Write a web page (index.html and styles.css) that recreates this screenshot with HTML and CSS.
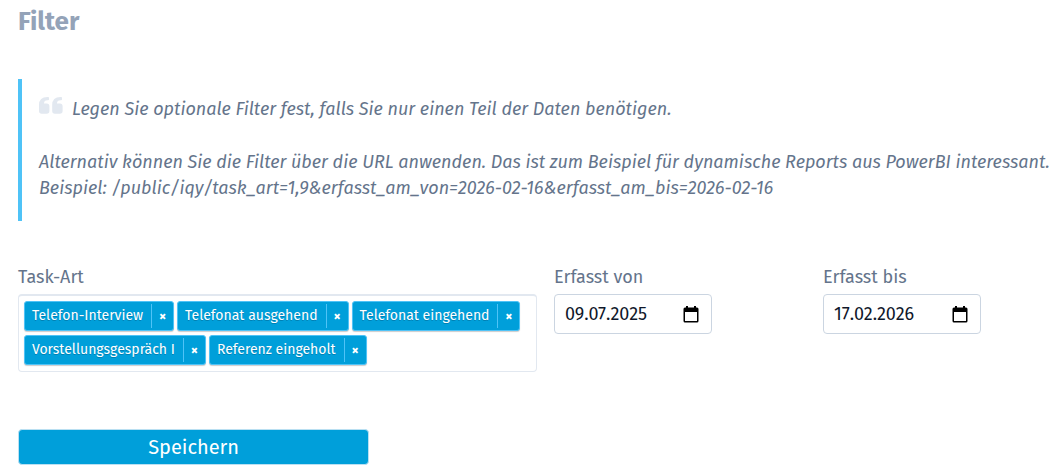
FILE: index.html
```html
<!DOCTYPE html>
<html lang="de">
  <head>
    <meta charset="UTF-8" />
    <meta name="viewport" content="width=device-width, initial-scale=1" />
    <title>Filter</title>
    <link rel="stylesheet" href="styles.css" />
  </head>
  <body>
    <h1 class="title">Filter</h1>

    <blockquote class="quote">
      <p class="quote-lead">
        <svg class="quote-icon" viewBox="0 0 24 17" aria-hidden="true">
          <path d="M8.5 0H9.2Q10 0 10 .8V2.4Q10 3.2 9.2 3.2H8.5Q5 3.2 5 6.5H7.7Q10.4 6.5 10.4 9.2V14Q10.4 16.8 7.7 16.8H2.7Q0 16.8 0 14V8Q0 0 8.5 0Z" />
          <path d="M21.5 0H22.2Q23 0 23 .8V2.4Q23 3.2 22.2 3.2H21.5Q18 3.2 18 6.5H20.9Q23.6 6.5 23.6 9.2V14Q23.6 16.8 20.9 16.8H15.9Q13.2 16.8 13.2 14V8Q13.2 0 21.5 0Z" />
        </svg>
        <span>Legen Sie optionale Filter fest, falls Sie nur einen Teil der Daten benötigen.</span>
      </p>
      <p class="quote-text">
        Alternativ können Sie die Filter über die URL anwenden. Das ist zum Beispiel für dynamische Reports aus PowerBI interessant.<br />
        Beispiel: /public/iqy/task_art=1,9&amp;erfasst_am_von=2026-02-16&amp;erfasst_am_bis=2026-02-16
      </p>
    </blockquote>

    <form class="filter-form">
      <div class="filter-fields">
        <div class="field">
          <span class="label" id="task-art-label">Task-Art</span>
          <div class="tags" role="group" aria-labelledby="task-art-label">
            <span class="tag"><span class="tag-name">Telefon-Interview</span><button type="button" class="tag-remove">×</button></span>
            <span class="tag"><span class="tag-name">Telefonat ausgehend</span><button type="button" class="tag-remove">×</button></span>
            <span class="tag"><span class="tag-name">Telefonat eingehend</span><button type="button" class="tag-remove">×</button></span>
            <span class="tag"><span class="tag-name">Vorstellungsgespräch I</span><button type="button" class="tag-remove">×</button></span>
            <span class="tag"><span class="tag-name">Referenz eingeholt</span><button type="button" class="tag-remove">×</button></span>
          </div>
        </div>
        <div class="field">
          <label class="label" for="erfasst-von">Erfasst von</label>
          <div class="date">
            <input type="text" id="erfasst-von" name="erfasst_am_von" class="date-input" value="09.07.2025" />
            <button type="button" class="date-button">
              <svg viewBox="0 0 16 17" aria-hidden="true">
                <path d="M3 0H5V1.5H11V0H13V1.5H14Q15.5 1.5 15.5 3V15Q15.5 16.5 14 16.5H2Q.5 16.5 .5 15V3Q.5 1.5 2 1.5H3ZM2 6V15H14V6Z" />
              </svg>
            </button>
          </div>
        </div>
        <div class="field">
          <label class="label" for="erfasst-bis">Erfasst bis</label>
          <div class="date">
            <input type="text" id="erfasst-bis" name="erfasst_am_bis" class="date-input" value="17.02.2026" />
            <button type="button" class="date-button">
              <svg viewBox="0 0 16 17" aria-hidden="true">
                <path d="M3 0H5V1.5H11V0H13V1.5H14Q15.5 1.5 15.5 3V15Q15.5 16.5 14 16.5H2Q.5 16.5 .5 15V3Q.5 1.5 2 1.5H3ZM2 6V15H14V6Z" />
              </svg>
            </button>
          </div>
        </div>
      </div>
      <button type="submit" class="submit">Speichern</button>
    </form>
  </body>
</html>
```

FILE: styles.css
```css
* {
  box-sizing: border-box;
}

body {
  margin: 0;
  padding: 4px 0 4px 18px;
  background-color: #ffffff;
  color: #64748b;
  font-family: "Fira Sans Book", "Fira Sans", "Noto Sans", sans-serif;
  font-size: 18px;
  line-height: 26px;
}

button,
input {
  font-family: inherit;
}

.title {
  margin: 0 0 39px;
  color: #94a3b8;
  font-size: 26px;
  font-weight: 700;
  line-height: 36px;
}

.quote {
  margin: 0 0 43px;
  padding: 17px 0 20px 17px;
  border-left: 4px solid #4fc3f7;
  font-style: italic;
}

.quote-lead {
  display: flex;
  gap: 9px;
  margin: 0 0 27px;
}

.quote-icon {
  width: 24px;
  height: 17px;
  margin-top: 1px;
  fill: #e2e8f0;
}

.quote-text {
  margin: 0;
}

.filter-fields {
  display: grid;
  grid-template-columns: 519fr 252fr 228fr;
  gap: 17px;
  margin-bottom: 57px;
}

.label {
  display: block;
  margin-bottom: 4px;
}

.tags {
  display: flex;
  flex-wrap: wrap;
  gap: 4px 3px;
  padding: 5px 5px 6px;
  border: 1px solid #e2e8f0;
  border-top-width: 2px;
  border-radius: 4px;
}

.tag {
  display: flex;
  align-items: center;
  height: 30px;
  padding: 0 0 0 7px;
  border: 1px solid #4fc3f7;
  border-radius: 3px;
  background-color: #009fda;
  box-shadow: 0 1px 1px rgba(0, 0, 0, 0.2);
  color: #ffffff;
  font-size: 14px;
  text-shadow: 0 1px 0 rgba(0, 51, 83, 0.3);
}

.tag-remove {
  width: 22px;
  height: 24px;
  margin-left: 8px;
  padding: 0;
  border: 0;
  border-left: 1px solid #4fc3f7;
  background: none;
  color: #ffffff;
  font-size: 14px;
  font-weight: 700;
  cursor: pointer;
}

.date {
  display: flex;
  align-items: center;
  width: 158px;
  height: 40px;
  padding: 0 12px 0 10px;
  border: 1px solid #cbd5e1;
  border-radius: 4px;
}

.date-input {
  flex: 1;
  min-width: 0;
  padding: 0;
  border: 0;
  outline: 0;
  background: none;
  color: #0f172a;
  font-size: 18px;
}

.date-button {
  display: flex;
  padding: 0;
  border: 0;
  background: none;
  cursor: pointer;
}

.date-button svg {
  width: 16px;
  height: 17px;
  fill: #000000;
  fill-rule: evenodd;
}

.submit {
  display: block;
  width: 34%;
  height: 36px;
  padding: 0;
  border: 1px solid #bae0f2;
  border-radius: 4px;
  background-color: #009fda;
  color: #ffffff;
  font-size: 20px;
  cursor: pointer;
}
```
